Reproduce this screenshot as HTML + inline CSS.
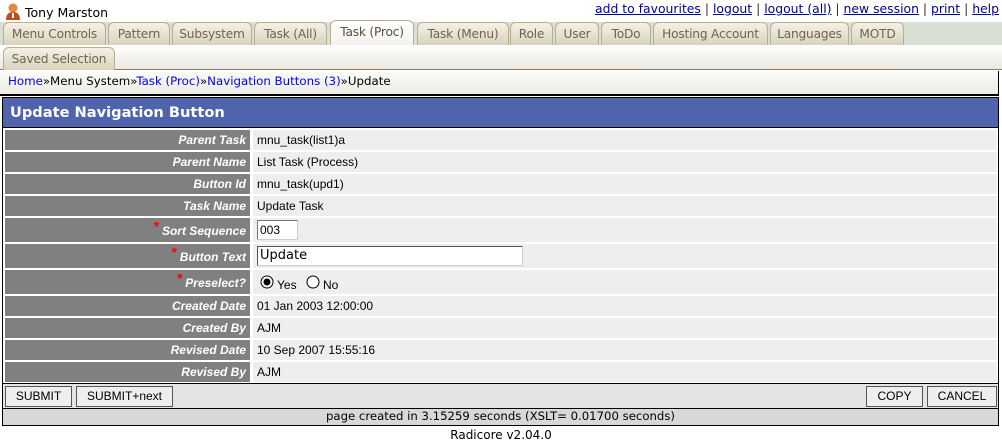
<!DOCTYPE html>
<html><head><meta charset="utf-8"><style>
*{margin:0;padding:0;box-sizing:border-box}
body{width:1002px;height:442px;background:#fff;position:relative;overflow:hidden;font-family:"DejaVu Sans","Liberation Sans",sans-serif;font-size:12px;color:#000}
.a{position:absolute}
.tab{position:absolute;height:23px;border:1px solid #b8ae90;border-bottom:none;border-radius:6px 6px 0 0;background:linear-gradient(#f4f1e6,#d9d3bd);color:#6e6354;font-size:12.2px;line-height:22px;text-align:center;white-space:nowrap;letter-spacing:-0.2px}
.tab.act{background:linear-gradient(#fff,#f3f2ec);color:#5a5044;height:25px;top:20px!important}
.lnk{color:#00009c;text-decoration:underline}
.lab{position:absolute;left:5px;width:245px;background:#808080;color:#fff;font:italic bold 12px "Liberation Sans",sans-serif;text-align:right;padding-right:4px}
.val{position:absolute;left:253px;width:744px;background:#eeeeee;font:12px "Liberation Sans",sans-serif;padding-left:4px}
.req{color:#f00;font-size:14px;position:relative;top:-4px;line-height:1px}
.btn{position:absolute;top:386px;height:21px;border:1px solid #555;background:#eee;font:12px "Liberation Sans",sans-serif;line-height:19px;text-align:center}
</style></head><body>
<div class="a" style="left:5px;top:2px;width:16px;height:18px">
<svg width="16" height="18"><circle cx="8" cy="6" r="4.5" fill="#e08a3c"/><path d="M1 18 Q1 10 8 10 Q15 10 15 18Z" fill="#c44a1c"/><rect x="7" y="11" width="2" height="5" fill="#fff"/></svg></div>
<div class="a" style="left:25px;top:5px;font-size:12.5px">Tony Marston</div>
<div class="a" style="right:3px;top:1px;font-size:12.4px;color:#333;white-space:nowrap"><span class="lnk">add to favourites</span> | <span class="lnk">logout</span> | <span class="lnk">logout (all)</span> | <span class="lnk">new session</span> | <span class="lnk">print</span> | <span class="lnk">help</span></div>
<div class="a" style="left:0;top:22px;width:1002px;height:23px;background:#dadfd3"></div>
<div class="a" style="left:0;top:45px;width:1002px;height:25px;background:linear-gradient(#ffffff,#ebe9e1);border-bottom:1px solid #8b7d6b"></div>
<div class="tab" style="left:3px;top:22px;width:103px">Menu Controls</div>
<div class="tab" style="left:108px;top:22px;width:62px">Pattern</div>
<div class="tab" style="left:172px;top:22px;width:80px">Subsystem</div>
<div class="tab" style="left:254px;top:22px;width:73px">Task (All)</div>
<div class="tab act" style="left:330px;width:84px">Task (Proc)</div>
<div class="tab" style="left:417px;top:22px;width:92px">Task (Menu)</div>
<div class="tab" style="left:510px;top:22px;width:43px">Role</div>
<div class="tab" style="left:555px;top:22px;width:44px">User</div>
<div class="tab" style="left:601px;top:22px;width:50px">ToDo</div>
<div class="tab" style="left:653px;top:22px;width:115px">Hosting Account</div>
<div class="tab" style="left:770px;top:22px;width:79px">Languages</div>
<div class="tab" style="left:851px;top:22px;width:53px">MOTD</div>
<div class="tab" style="left:3px;top:47px;width:112px">Saved Selection</div>
<div class="a" style="left:0;top:71px;width:999px;height:25px;background:linear-gradient(#fbfbf9,#ecebe4);border-right:1px solid #000;border-bottom:2px solid #000;padding:3px 0 0 8px;font-size:11.8px;white-space:nowrap"><span style="color:#00f">Home</span>»Menu System»<span style="color:#00f">Task (Proc)</span>»<span style="color:#00f">Navigation Buttons (3)</span>»Update</div>
<div class="a" style="left:2px;top:97px;width:997px;height:31px;background:#4f64ad;border:1px solid #000;color:#fff;font-weight:bold;font-size:14.6px;padding:6px 0 0 7px">Update Navigation Button</div>
<div class="a" style="left:2px;top:128px;width:997px;height:256px;border-left:1px solid #000;border-right:1px solid #000"></div>
<div class="lab" style="top:130px;height:20px;line-height:20px">Parent Task</div><div class="val" style="top:130px;height:20px;line-height:20px">mnu_task(list1)a</div>
<div class="lab" style="top:152px;height:20px;line-height:20px">Parent Name</div><div class="val" style="top:152px;height:20px;line-height:20px">List Task (Process)</div>
<div class="lab" style="top:174px;height:20px;line-height:20px">Button Id</div><div class="val" style="top:174px;height:20px;line-height:20px">mnu_task(upd1)</div>
<div class="lab" style="top:196px;height:20px;line-height:20px">Task Name</div><div class="val" style="top:196px;height:20px;line-height:20px">Update Task</div>
<div class="lab" style="top:218px;height:24px;line-height:26px"><span class="req">*</span> Sort Sequence</div><div class="val" style="top:218px;height:24px"><div class="a" style="left:4px;top:2px;width:41px;height:20px;background:#fff;border:1px solid #777;border-right-color:#ccc;border-bottom-color:#ccc;padding:2px 0 0 2px">003</div></div>
<div class="lab" style="top:244px;height:24px;line-height:26px"><span class="req">*</span> Button Text</div><div class="val" style="top:244px;height:24px"><div class="a" style="left:4px;top:2px;width:266px;height:20px;background:#fff;border:1px solid #555;border-right-color:#ccc;border-bottom-color:#ccc;padding:1px 0 0 2px;font-size:13px;font-family:'DejaVu Sans',sans-serif">Update</div></div>
<div class="lab" style="top:270px;height:24px;line-height:26px"><span class="req">*</span> Preselect?</div><div class="val" style="top:270px;height:24px">
<svg class="a" style="left:7px;top:5px" width="16" height="16"><circle cx="7" cy="7" r="6" fill="#fff" stroke="#000"/><circle cx="7" cy="7" r="3.5" fill="#000"/></svg>
<span class="a" style="left:24px;top:8px">Yes</span>
<svg class="a" style="left:53px;top:5px" width="16" height="16"><circle cx="7" cy="7" r="6" fill="#fff" stroke="#000"/></svg>
<span class="a" style="left:70px;top:8px">No</span></div>
<div class="lab" style="top:296px;height:20px;line-height:20px">Created Date</div><div class="val" style="top:296px;height:20px;line-height:20px">01 Jan 2003 12:00:00</div>
<div class="lab" style="top:318px;height:20px;line-height:20px">Created By</div><div class="val" style="top:318px;height:20px;line-height:20px">AJM</div>
<div class="lab" style="top:340px;height:20px;line-height:20px">Revised Date</div><div class="val" style="top:340px;height:20px;line-height:20px">10 Sep 2007 15:55:16</div>
<div class="lab" style="top:362px;height:20px;line-height:20px">Revised By</div><div class="val" style="top:362px;height:20px;line-height:20px">AJM</div>
<div class="a" style="left:2px;top:383px;width:997px;height:26px;background:#e4e4e4;border:1px solid #000"></div>
<div class="btn" style="left:5px;width:67px">SUBMIT</div>
<div class="btn" style="left:76px;width:97px">SUBMIT+next</div>
<div class="btn" style="left:866px;width:57px">COPY</div>
<div class="btn" style="left:927px;width:70px">CANCEL</div>
<div class="a" style="left:2px;top:409px;width:997px;height:17px;background:#d8d8d8;border:1px solid #000;border-top:none;text-align:center;font-size:11.7px;line-height:15px">page created in 3.15259 seconds (XSLT= 0.01700 seconds)</div>
<div class="a" style="left:0;top:428px;width:1002px;text-align:center;font-size:12px">Radicore v2.04.0</div>
</body></html>
